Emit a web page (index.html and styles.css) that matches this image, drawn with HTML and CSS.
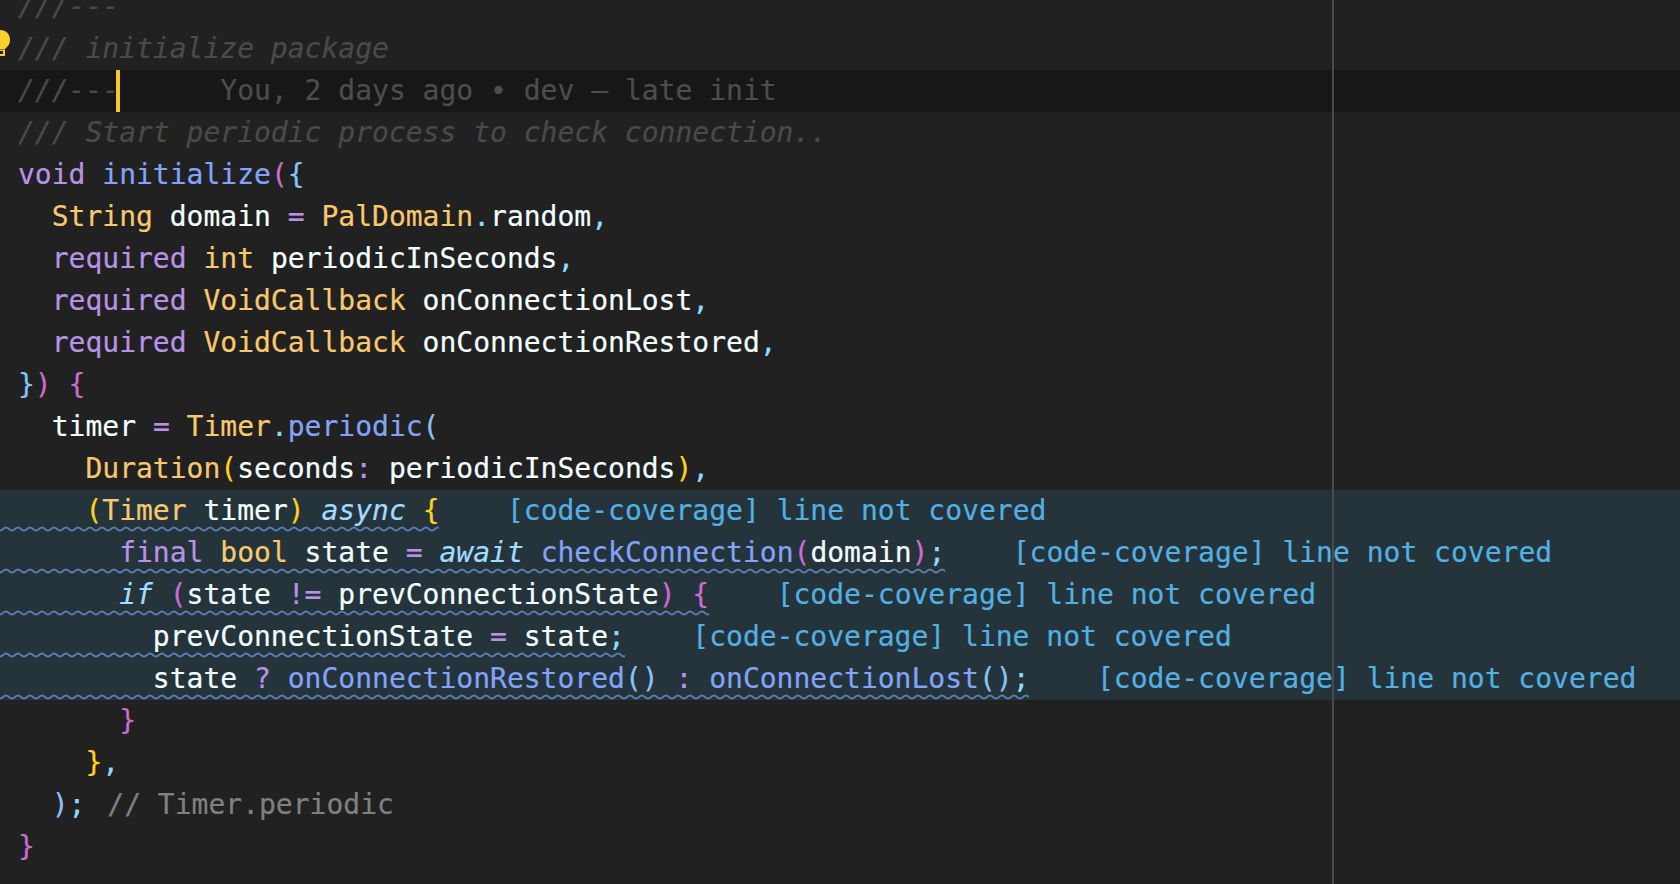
FILE: index.html
```html
<!DOCTYPE html>
<html lang="en">
<head>
    <meta charset="UTF-8">
    <title>connection.dart</title>
    <link rel="stylesheet" href="styles.css">
</head>
<body>
    <div class="editor">
        <div class="ruler"></div>

        <div class="line"><span class="cm">///---</span></div>
        <div class="line"><svg class="bulb" width="12" height="28" viewBox="0 0 12 28"><path d="M0 2C6 2 10 6 10 12C10 15.500 8.500 17.500 6.500 19.500L5 21L0 21Z" fill="#f9d02c"/><path d="M0 21.500H5V28H0ZM0 23V26H3V23Z" fill="#f9d02c" fill-rule="evenodd"/></svg><span class="cm">/// initialize package</span></div>
        <div class="line current"><span class="cm">///---</span><span class="cursor"></span><span class="blame">      You, 2 days ago • dev – late init</span></div>
        <div class="line"><span class="cm">/// Start periodic process to check connection..</span></div>
        <div class="line"><span class="kw">void</span> <span class="fn">initialize</span><span class="b2">(</span><span class="b3">{</span></div>
        <div class="line">  <span class="ty">String</span> <span class="id">domain</span> <span class="kw">=</span> <span class="ty">PalDomain</span><span class="pn">.</span><span class="id">random</span><span class="pn">,</span></div>
        <div class="line">  <span class="kw">required</span> <span class="ty">int</span> <span class="id">periodicInSeconds</span><span class="pn">,</span></div>
        <div class="line">  <span class="kw">required</span> <span class="ty">VoidCallback</span> <span class="id">onConnectionLost</span><span class="pn">,</span></div>
        <div class="line">  <span class="kw">required</span> <span class="ty">VoidCallback</span> <span class="id">onConnectionRestored</span><span class="pn">,</span></div>
        <div class="line"><span class="b3">}</span><span class="b2">)</span> <span class="b2">{</span></div>
        <div class="line">  <span class="id">timer</span> <span class="kw">=</span> <span class="ty">Timer</span><span class="pn">.</span><span class="fn">periodic</span><span class="b3">(</span></div>
        <div class="line">    <span class="ty">Duration</span><span class="b1">(</span><span class="id">seconds</span><span class="kw">:</span> <span class="id">periodicInSeconds</span><span class="b1">)</span><span class="pn">,</span></div>

        <div class="line uncovered"><span class="squiggle">    <span class="b1">(</span><span class="ty">Timer</span> <span class="id">timer</span><span class="b1">)</span> <span class="it">async</span> <span class="b1">{</span></span><span class="note">    [code-coverage] line not covered</span></div>
        <div class="line uncovered"><span class="squiggle">      <span class="kw">final</span> <span class="ty">bool</span> <span class="id">state</span> <span class="kw">=</span> <span class="it">await</span> <span class="fn">checkConnection</span><span class="b2">(</span><span class="id">domain</span><span class="b2">)</span><span class="pn">;</span></span><span class="note">    [code-coverage] line not covered</span></div>
        <div class="line uncovered"><span class="squiggle">      <span class="it">if</span> <span class="b2">(</span><span class="id">state</span> <span class="kw">!=</span> <span class="id">prevConnectionState</span><span class="b2">)</span> <span class="b2">{</span></span><span class="note">    [code-coverage] line not covered</span></div>
        <div class="line uncovered"><span class="squiggle">        <span class="id">prevConnectionState</span> <span class="kw">=</span> <span class="id">state</span><span class="pn">;</span></span><span class="note">    [code-coverage] line not covered</span></div>
        <div class="line uncovered"><span class="squiggle">        <span class="id">state</span> <span class="kw">?</span> <span class="fn">onConnectionRestored</span><span class="b3">()</span> <span class="kw">:</span> <span class="fn">onConnectionLost</span><span class="b3">()</span><span class="pn">;</span></span><span class="note">    [code-coverage] line not covered</span></div>

        <div class="line">      <span class="b2">}</span></div>
        <div class="line">    <span class="b1">}</span><span class="pn">,</span></div>
        <div class="line">  <span class="b3">)</span><span class="pn">;</span> <span class="label">// Timer.periodic</span></div>
        <div class="line"><span class="b2">}</span></div>
    </div>
</body>
</html>
```

FILE: styles.css
```css
html, body {
    margin: 0;
    height: 100%;
    overflow: hidden;
    background: #212121;
}
.editor {
    position: relative;
    height: 898px;
    margin-top: -14px;
    font-family: "DejaVu Sans Mono", monospace;
    font-size: 28px;
    -webkit-text-stroke: 0.2px;
    color: #eeffff;
}
.ruler {
    position: absolute;
    top: 0;
    bottom: 0;
    left: 1332px;
    width: 2px;
    background: #4a4a4a;
    z-index: 1;
}
.line {
    position: relative;
    height: 42px;
    line-height: 42px;
    padding-left: 18px;
    white-space: pre;
}
.current {
    background: #171717;
}
.uncovered {
    background: #25343b;
}
.squiggle {
    display: inline-block;
    height: 42px;
    margin-left: -18px;
    padding-left: 18px;
    vertical-align: top;
    background: url("data:image/svg+xml,%3Csvg xmlns='http://www.w3.org/2000/svg' width='12' height='6'%3E%3Cpath d='M0 4.500C3 4.500 3 1.500 6 1.500S9 4.500 12 4.500' fill='none' stroke='%235a7bb0' stroke-width='1.800'/%3E%3C/svg%3E") repeat-x left bottom;
}
.cursor {
    position: absolute;
    top: 0;
    width: 4px;
    height: 42px;
    margin-left: -3px;
    background: #f9c52c;
}
.bulb {
    position: absolute;
    left: 0;
    top: 0;
}
.cm {
    color: #4a4a4a;
    font-style: italic;
}
.blame {
    color: #4d4d4d;
}
.note {
    color: #52b0e2;
}
.label {
    margin-left: 5px;
    color: #808080;
}
.kw {
    color: #b992e6;
}
.fn {
    color: #82a4f8;
}
.ty {
    color: #f8c86f;
}
.id {
    color: #f2ffff;
}
.pn {
    color: #89ddff;
}
.it {
    color: #a0dcff;
    font-style: italic;
}
.b1 {
    color: #ffd21f;
}
.b2 {
    color: #cb6cd0;
}
.b3 {
    color: #87c4f5;
}
```
